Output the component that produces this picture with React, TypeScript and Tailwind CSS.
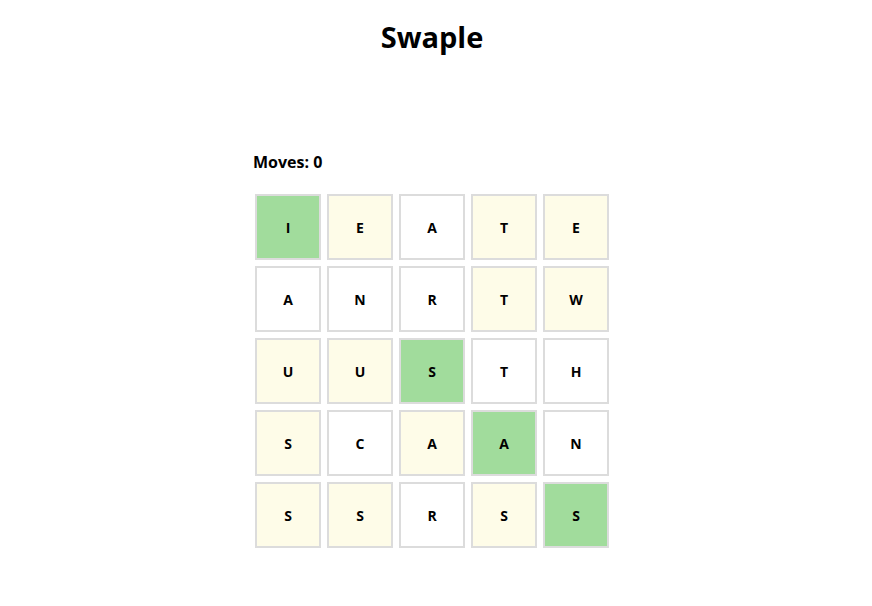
import React from 'react';

type Tile = { letter: string; state: 'green' | 'yellow' | 'none' };

const board: Tile[][] = [
  [{ letter: 'I', state: 'green' }, { letter: 'E', state: 'yellow' }, { letter: 'A', state: 'none' }, { letter: 'T', state: 'yellow' }, { letter: 'E', state: 'yellow' }],
  [{ letter: 'A', state: 'none' }, { letter: 'N', state: 'none' }, { letter: 'R', state: 'none' }, { letter: 'T', state: 'yellow' }, { letter: 'W', state: 'yellow' }],
  [{ letter: 'U', state: 'yellow' }, { letter: 'U', state: 'yellow' }, { letter: 'S', state: 'green' }, { letter: 'T', state: 'none' }, { letter: 'H', state: 'none' }],
  [{ letter: 'S', state: 'yellow' }, { letter: 'C', state: 'none' }, { letter: 'A', state: 'yellow' }, { letter: 'A', state: 'green' }, { letter: 'N', state: 'none' }],
  [{ letter: 'S', state: 'yellow' }, { letter: 'S', state: 'yellow' }, { letter: 'R', state: 'none' }, { letter: 'S', state: 'yellow' }, { letter: 'S', state: 'green' }],
];

const tileBg = {
  green: 'bg-[#a1dc9c]',
  yellow: 'bg-[#fefce8]',
  none: 'bg-white',
};

export default function App() {
  return (
    <div className="min-h-[606px] w-full bg-white pr-2 text-black" style={{ fontFamily: '"Open Sans", "Liberation Sans", sans-serif' }}>
      <h1 className="pt-[17px] text-center text-[29px] font-bold leading-[40px]">Swaple</h1>
      <div className="mx-auto mt-[94px] w-[360px]">
        <p className="ml-px text-[16px] font-bold leading-[22px]">Moves: 0</p>
        <div className="mt-[18px] flex flex-col">
          {board.map((row, r) => (
            <div key={r} className="flex">
              {row.map((t, c) => (
                <div
                  key={c}
                  className={`m-[3px] flex h-[66px] w-[66px] items-center justify-center border-2 border-[#dcdcdc] text-[14px] font-bold ${tileBg[t.state]}`}
                >
                  {t.letter}
                </div>
              ))}
            </div>
          ))}
        </div>
      </div>
    </div>
  );
}
